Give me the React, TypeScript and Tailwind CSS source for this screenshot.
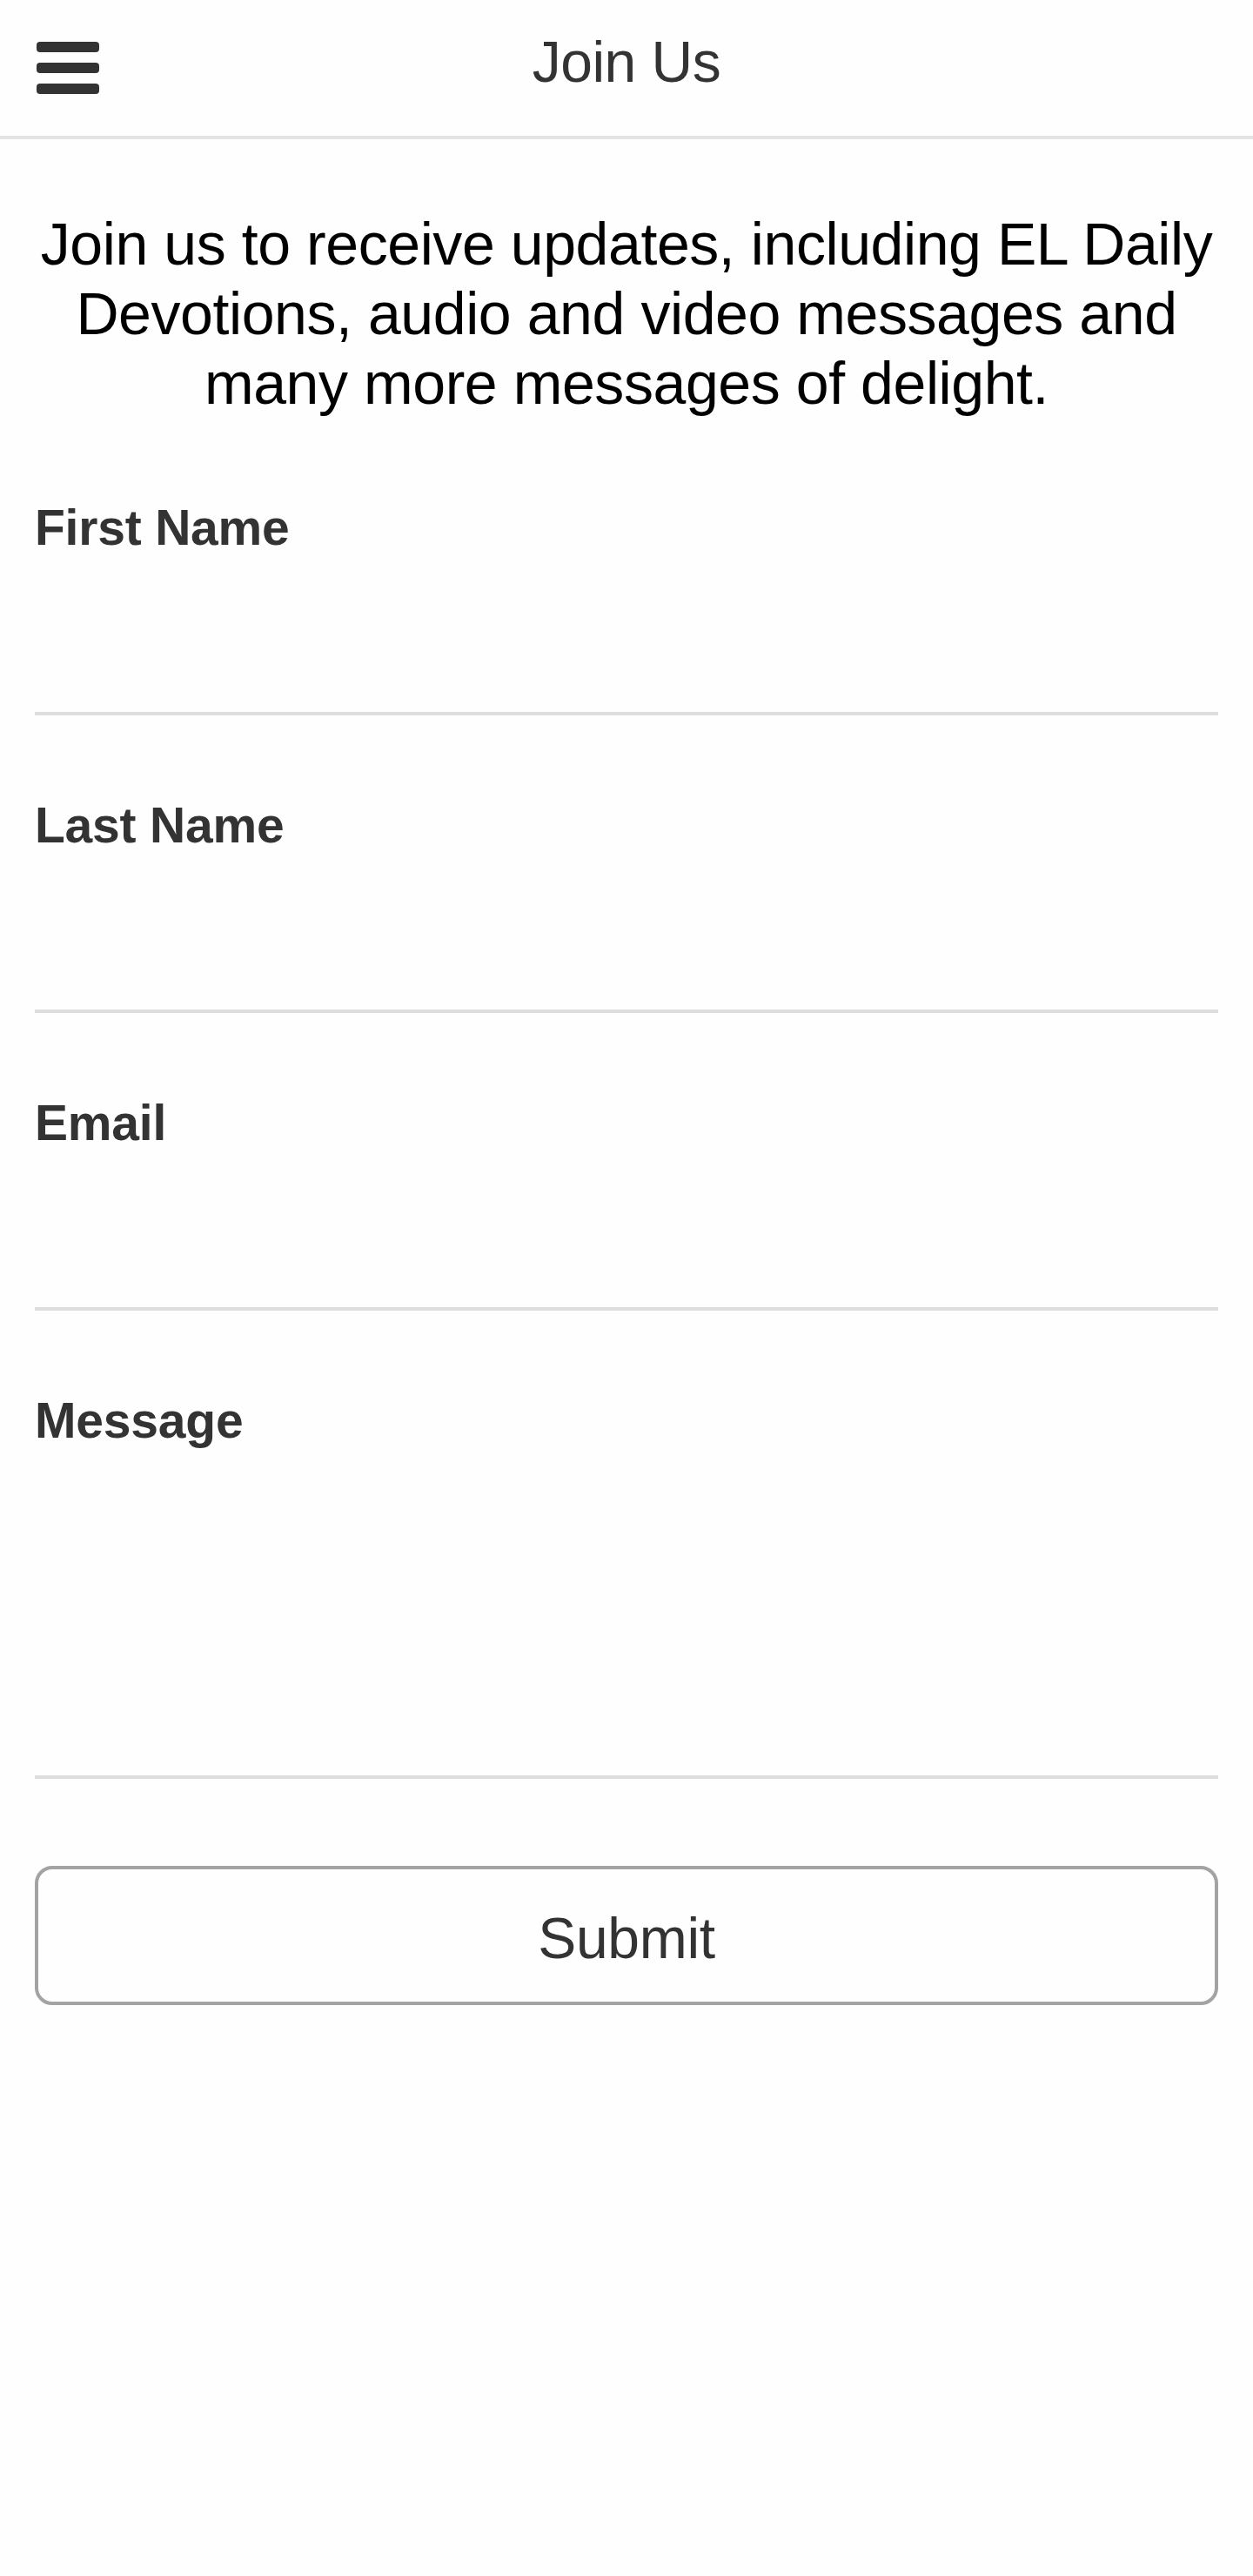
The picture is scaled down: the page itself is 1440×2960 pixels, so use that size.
import { useState } from "react";

interface FieldProps {
  id: string;
  label: string;
  type?: string;
  multiline?: boolean;
  value: string;
  onChange: (value: string) => void;
}

function Field({
  id,
  label,
  type = "text",
  multiline = false,
  value,
  onChange,
}: FieldProps) {
  return (
    <div className="flex flex-col">
      <label
        htmlFor={id}
        className="text-[57px] leading-[64px] font-bold tracking-[-0.2px]"
      >
        {label}
      </label>
      {multiline ? (
        <textarea
          id={id}
          value={value}
          onChange={(e) => onChange(e.target.value)}
          className="block h-[380px] w-full resize-none border-b-4 border-[#ddd] bg-transparent text-[64px] outline-none"
        />
      ) : (
        <input
          id={id}
          type={type}
          value={value}
          onChange={(e) => onChange(e.target.value)}
          className="block h-[184px] w-full border-b-4 border-[#ddd] bg-transparent text-[64px] outline-none"
        />
      )}
    </div>
  );
}

function Header() {
  return (
    <header className="grid h-40 grid-cols-[1fr_auto_1fr] items-start border-b-4 border-[#e4e4e4] px-10">
      <button
        aria-label="Menu"
        className="mt-12 ml-[1.5px] flex w-[72.5px] flex-col gap-3"
      >
        <span className="h-3 w-full rounded-[4px] bg-[#333]" />
        <span className="h-3 w-full rounded-[4px] bg-[#333]" />
        <span className="h-3 w-full rounded-[4px] bg-[#333]" />
      </button>
      <h1 className="mt-[31px] text-[66px] leading-[80px] tracking-[-0.5px]">
        Join Us
      </h1>
    </header>
  );
}

export default function App() {
  const [form, setForm] = useState({
    firstName: "",
    lastName: "",
    email: "",
    message: "",
  });

  const update = (key: keyof typeof form) => (value: string) =>
    setForm((prev) => ({ ...prev, [key]: value }));

  return (
    <div className="min-h-screen bg-[#fefefe] font-['Liberation_Sans',Arial,sans-serif] text-[#333]">
      <Header />
      <main className="px-10 pt-20">
        <p className="text-center text-[68px] leading-[80px] tracking-[-0.42px] whitespace-nowrap text-black">
          Join us to receive updates, including EL Daily
          <br />
          Devotions, audio and video messages and
          <br />
          many more messages of delight.
        </p>
        <form
          className="mt-[94px] flex flex-col gap-[94px]"
          onSubmit={(e) => e.preventDefault()}
        >
          <Field
            id="firstName"
            label="First Name"
            value={form.firstName}
            onChange={update("firstName")}
          />
          <Field
            id="lastName"
            label="Last Name"
            value={form.lastName}
            onChange={update("lastName")}
          />
          <Field
            id="email"
            label="Email"
            type="email"
            value={form.email}
            onChange={update("email")}
          />
          <Field
            id="message"
            label="Message"
            multiline
            value={form.message}
            onChange={update("message")}
          />
          <button
            type="submit"
            className="mt-[6px] h-40 w-full rounded-[20px] border-4 border-[#a3a3a3] pt-1.5 text-[66px] leading-[80px] tracking-[-0.3px]"
          >
            Submit
          </button>
        </form>
      </main>
    </div>
  );
}
